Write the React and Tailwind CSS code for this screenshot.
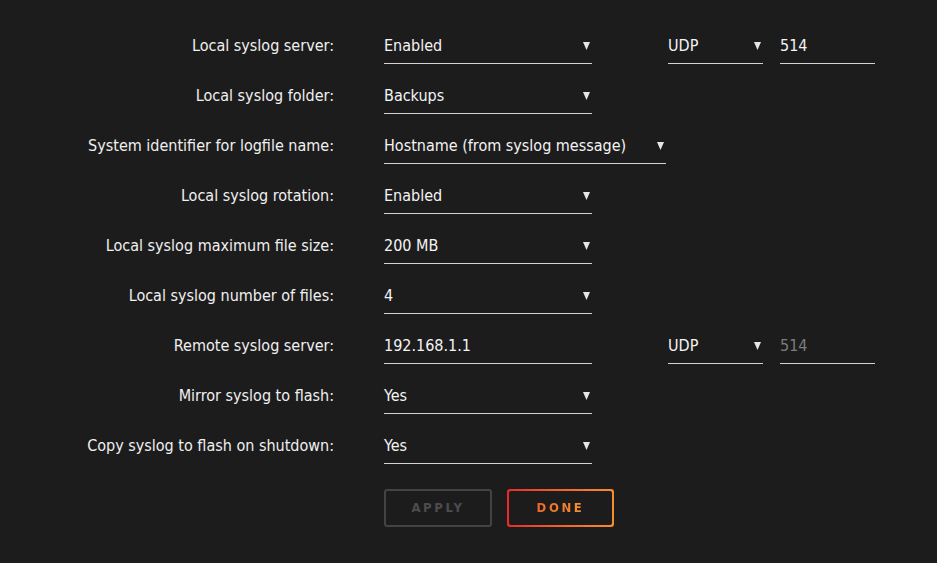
import React from "react";

const font = { fontFamily: '"DejaVu Sans Condensed", "DejaVu Sans", sans-serif' };

function Arrow() {
  return (
    <svg width="7" height="8" viewBox="0 0 7 8" className="shrink-0">
      <path d="M0 0 H7 L3.5 8 Z" fill="#e6e6e6" />
    </svg>
  );
}

function Select({ value, width = "w-[208px]" }) {
  return (
    <div className={`${width} flex items-center justify-between border-b border-[#d2d2d2] pb-[7px] pr-[2px] h-[28px]`}>
      <span className="leading-[20px] text-[#f4f4f4]">{value}</span>
      <Arrow />
    </div>
  );
}

function Input({ value, width = "w-[208px]", muted = false }) {
  return (
    <div className={`${width} flex items-center border-b border-[#d2d2d2] pb-[7px] h-[28px]`}>
      <span className={`leading-[20px] ${muted ? "text-[#7c7c7c]" : "text-[#f4f4f4]"}`}>{value}</span>
    </div>
  );
}

function Row({ label, children }) {
  return (
    <div className="flex h-[50px] pt-[15px]">
      <div className="w-[334px] text-right leading-[20px] text-[#f0f0f0]">{label}</div>
      <div className="ml-[50px] flex">{children}</div>
    </div>
  );
}

export default function App() {
  return (
    <div className="min-h-screen w-full bg-[#1d1c1d] text-[16px] pt-[21px]" style={font}>
      <Row label="Local syslog server:">
        <Select value="Enabled" />
        <div className="ml-[76px]">
          <Select value="UDP" width="w-[95px]" />
        </div>
        <div className="ml-[17px]">
          <Input value="514" width="w-[95px]" />
        </div>
      </Row>
      <Row label="Local syslog folder:">
        <Select value="Backups" />
      </Row>
      <Row label="System identifier for logfile name:">
        <Select value="Hostname (from syslog message)" width="w-[282px]" />
      </Row>
      <Row label="Local syslog rotation:">
        <Select value="Enabled" />
      </Row>
      <Row label="Local syslog maximum file size:">
        <Select value="200 MB" />
      </Row>
      <Row label="Local syslog number of files:">
        <Select value="4" />
      </Row>
      <Row label="Remote syslog server:">
        <Input value="192.168.1.1" />
        <div className="ml-[76px]">
          <Select value="UDP" width="w-[95px]" />
        </div>
        <div className="ml-[17px]">
          <Input value="514" width="w-[95px]" muted />
        </div>
      </Row>
      <Row label="Mirror syslog to flash:">
        <Select value="Yes" />
      </Row>
      <Row label="Copy syslog to flash on shutdown:">
        <Select value="Yes" />
      </Row>
      <div className="ml-[384px] mt-[18px] flex gap-[15px]">
        <button className="w-[108px] h-[38px] rounded-[3px] border-2 border-[#444344] text-[#4d4c4d] font-bold text-[13px] tracking-[0.2em]">
          APPLY
        </button>
        <div className="w-[107px] h-[38px] rounded-[3px] p-[2px] bg-gradient-to-r from-[#e8292a] to-[#f98d2c]">
          <button className="w-full h-full rounded-[2px] bg-[#1d1c1d] font-bold text-[13px] tracking-[0.2em]">
            <span className="bg-gradient-to-r from-[#f06a2a] to-[#f7902c] bg-clip-text text-transparent">DONE</span>
          </button>
        </div>
      </div>
    </div>
  );
}
